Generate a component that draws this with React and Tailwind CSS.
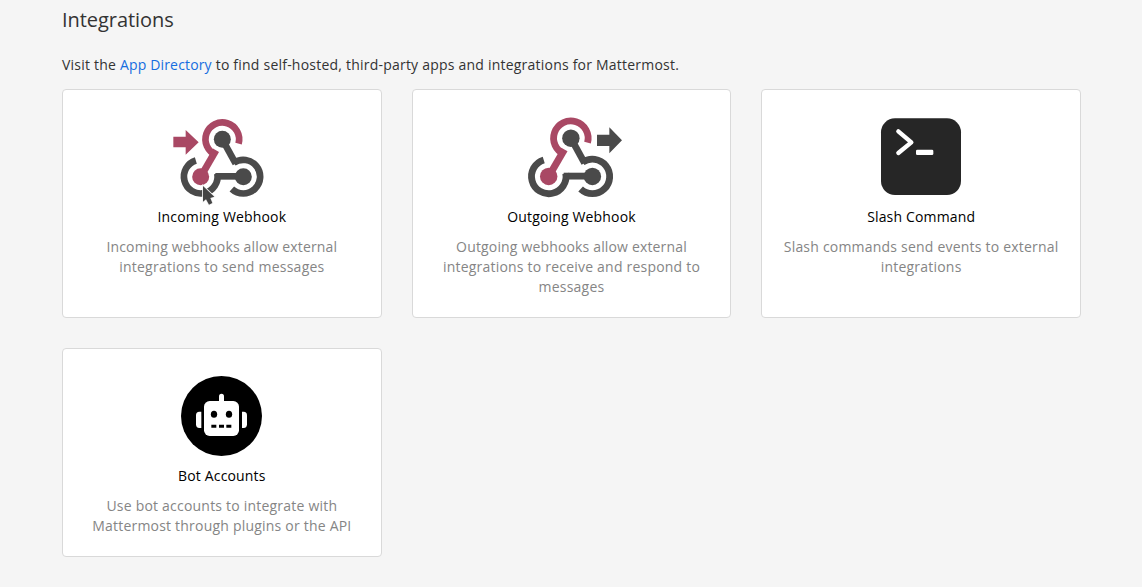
function Webhook({ children, className, transform }) {
  return (
    <svg viewBox="0 0 360 315" className={className} fill="none" strokeWidth="20">
      <g transform={transform}>
        <path d="M235.700 116A50.500 50.500 0 1 0 168 149.800" stroke="#a94864" />
        <path d="M168 136L122 215" stroke="#a94864" strokeWidth="21" />
        <circle cx="122" cy="215" r="25.500" fill="#a94864" />
        <path d="M107.500 166.600A50.500 50.500 0 1 0 172 206" stroke="#4a4a4a" />
        <path d="M166 214H250" stroke="#4a4a4a" />
        <circle cx="250" cy="215" r="25.500" fill="#4a4a4a" />
        <path d="M215.500 251.900A50.500 50.500 0 1 0 221 173.600" stroke="#4a4a4a" />
        <path d="M187 103L227 176" stroke="#4a4a4a" />
        <circle cx="187" cy="103" r="25.500" fill="#4a4a4a" />
      </g>
      {children}
    </svg>
  );
}

function IncomingIcon() {
  return (
    <Webhook className="mt-[3px] mr-[3px] h-[105px] w-[120px] shrink-0">
      <path d="M40 95H77V75L116 112L77 149V127H40Z" fill="#a94864" />
      <path
        d="M129 243V290L138 283L147 299L157 294L151 279L163 275Z"
        fill="#444"
        stroke="#f4f4f4"
        strokeWidth="5"
        paintOrder="stroke"
      />
    </Webhook>
  );
}

function OutgoingIcon() {
  return (
    <Webhook className="mt-[2px] ml-[8px] h-[105px] w-[120px] shrink-0" transform="translate(-24 -6) scale(1.025)">
      <path d="M246 89H283V67L321 106L283 145V123H246Z" fill="#4a4a4a" />
    </Webhook>
  );
}

function TerminalIcon() {
  return (
    <svg viewBox="0 0 330 300" className="mr-[2px] mb-[2px] h-[100px] w-[110px] shrink-0" fill="none">
      <rect x="48" y="40" width="240" height="230" rx="42" fill="#262626" />
      <path d="M100 79L139 112L100 144" stroke="#fff" strokeWidth="13" strokeLinecap="round" strokeLinejoin="round" />
      <rect x="153" y="134" width="52" height="16" rx="4" fill="#fff" />
    </svg>
  );
}

function BotIcon() {
  return (
    <svg viewBox="0 0 315 300" className="ml-[1px] h-[100px] w-[105px] shrink-0">
      <ellipse cx="154.500" cy="153" rx="121.500" ry="120" fill="#000" />
      <g fill="#fff">
        <rect x="147" y="86" width="15" height="34" rx="7.500" />
        <rect x="102" y="108" width="105" height="105" rx="17" />
        <path d="M94 140V189H88Q78 189 78 178V151Q78 140 88 140Z" />
        <path d="M216 140V189H221Q231 189 231 178V151Q231 140 221 140Z" />
      </g>
      <ellipse cx="132" cy="148" rx="9.500" ry="10.500" />
      <ellipse cx="177" cy="148" rx="9.500" ry="10.500" />
      <path d="M124 179h15v9h-15zM147 179h15v9h-15zM169 179h15v9h-15z" />
    </svg>
  );
}

function Card({ icon, title, children }) {
  return (
    <a className="flex flex-col items-center rounded-[4px] border border-[#d9d9d9] bg-white px-[15px] pt-[26px] pb-5 text-center">
      <div className="flex h-20 items-center justify-center">{icon}</div>
      <div className="mt-[11px] leading-5 tracking-[0.16px] text-black">{title}</div>
      <div className="mt-[10px] leading-5 tracking-[0.21px] text-[#858585]">{children}</div>
    </a>
  );
}

export default function App() {
  return (
    <main className="h-[587px] overflow-hidden bg-[#f5f5f5] pr-[61px] pl-[62px] font-['Open_Sans',sans-serif] text-sm text-[#333]">
      <h1 className="pt-[9px] text-xl leading-[22px] tracking-[-0.06px]">Integrations</h1>
      <p className="mt-6 leading-5 tracking-[0.218px]">
        Visit the <a className="tracking-[0.16px] text-[#166de0]">App Directory</a> to find self-hosted, third-party apps and integrations for Mattermost.
      </p>
      <div className="mt-[14px] grid grid-cols-3 grid-rows-[229px_209px] gap-[30px]">
        <Card icon={<IncomingIcon />} title="Incoming Webhook">
          <span className="tracking-[0.16px]">Incoming webhooks allow external</span>
          <br />
          <span className="tracking-[0.24px]">integrations to send messages</span>
        </Card>
        <Card icon={<OutgoingIcon />} title="Outgoing Webhook">
          <span className="tracking-[0.16px]">Outgoing webhooks allow external</span>
          <br />
          integrations to receive and respond to
          <br />
          messages
        </Card>
        <Card icon={<TerminalIcon />} title="Slash Command">
          Slash commands send events to external
          <br />
          integrations
        </Card>
        <Card icon={<BotIcon />} title="Bot Accounts">
          Use bot accounts to integrate with
          <br />
          Mattermost through plugins or the API
        </Card>
      </div>
    </main>
  );
}
